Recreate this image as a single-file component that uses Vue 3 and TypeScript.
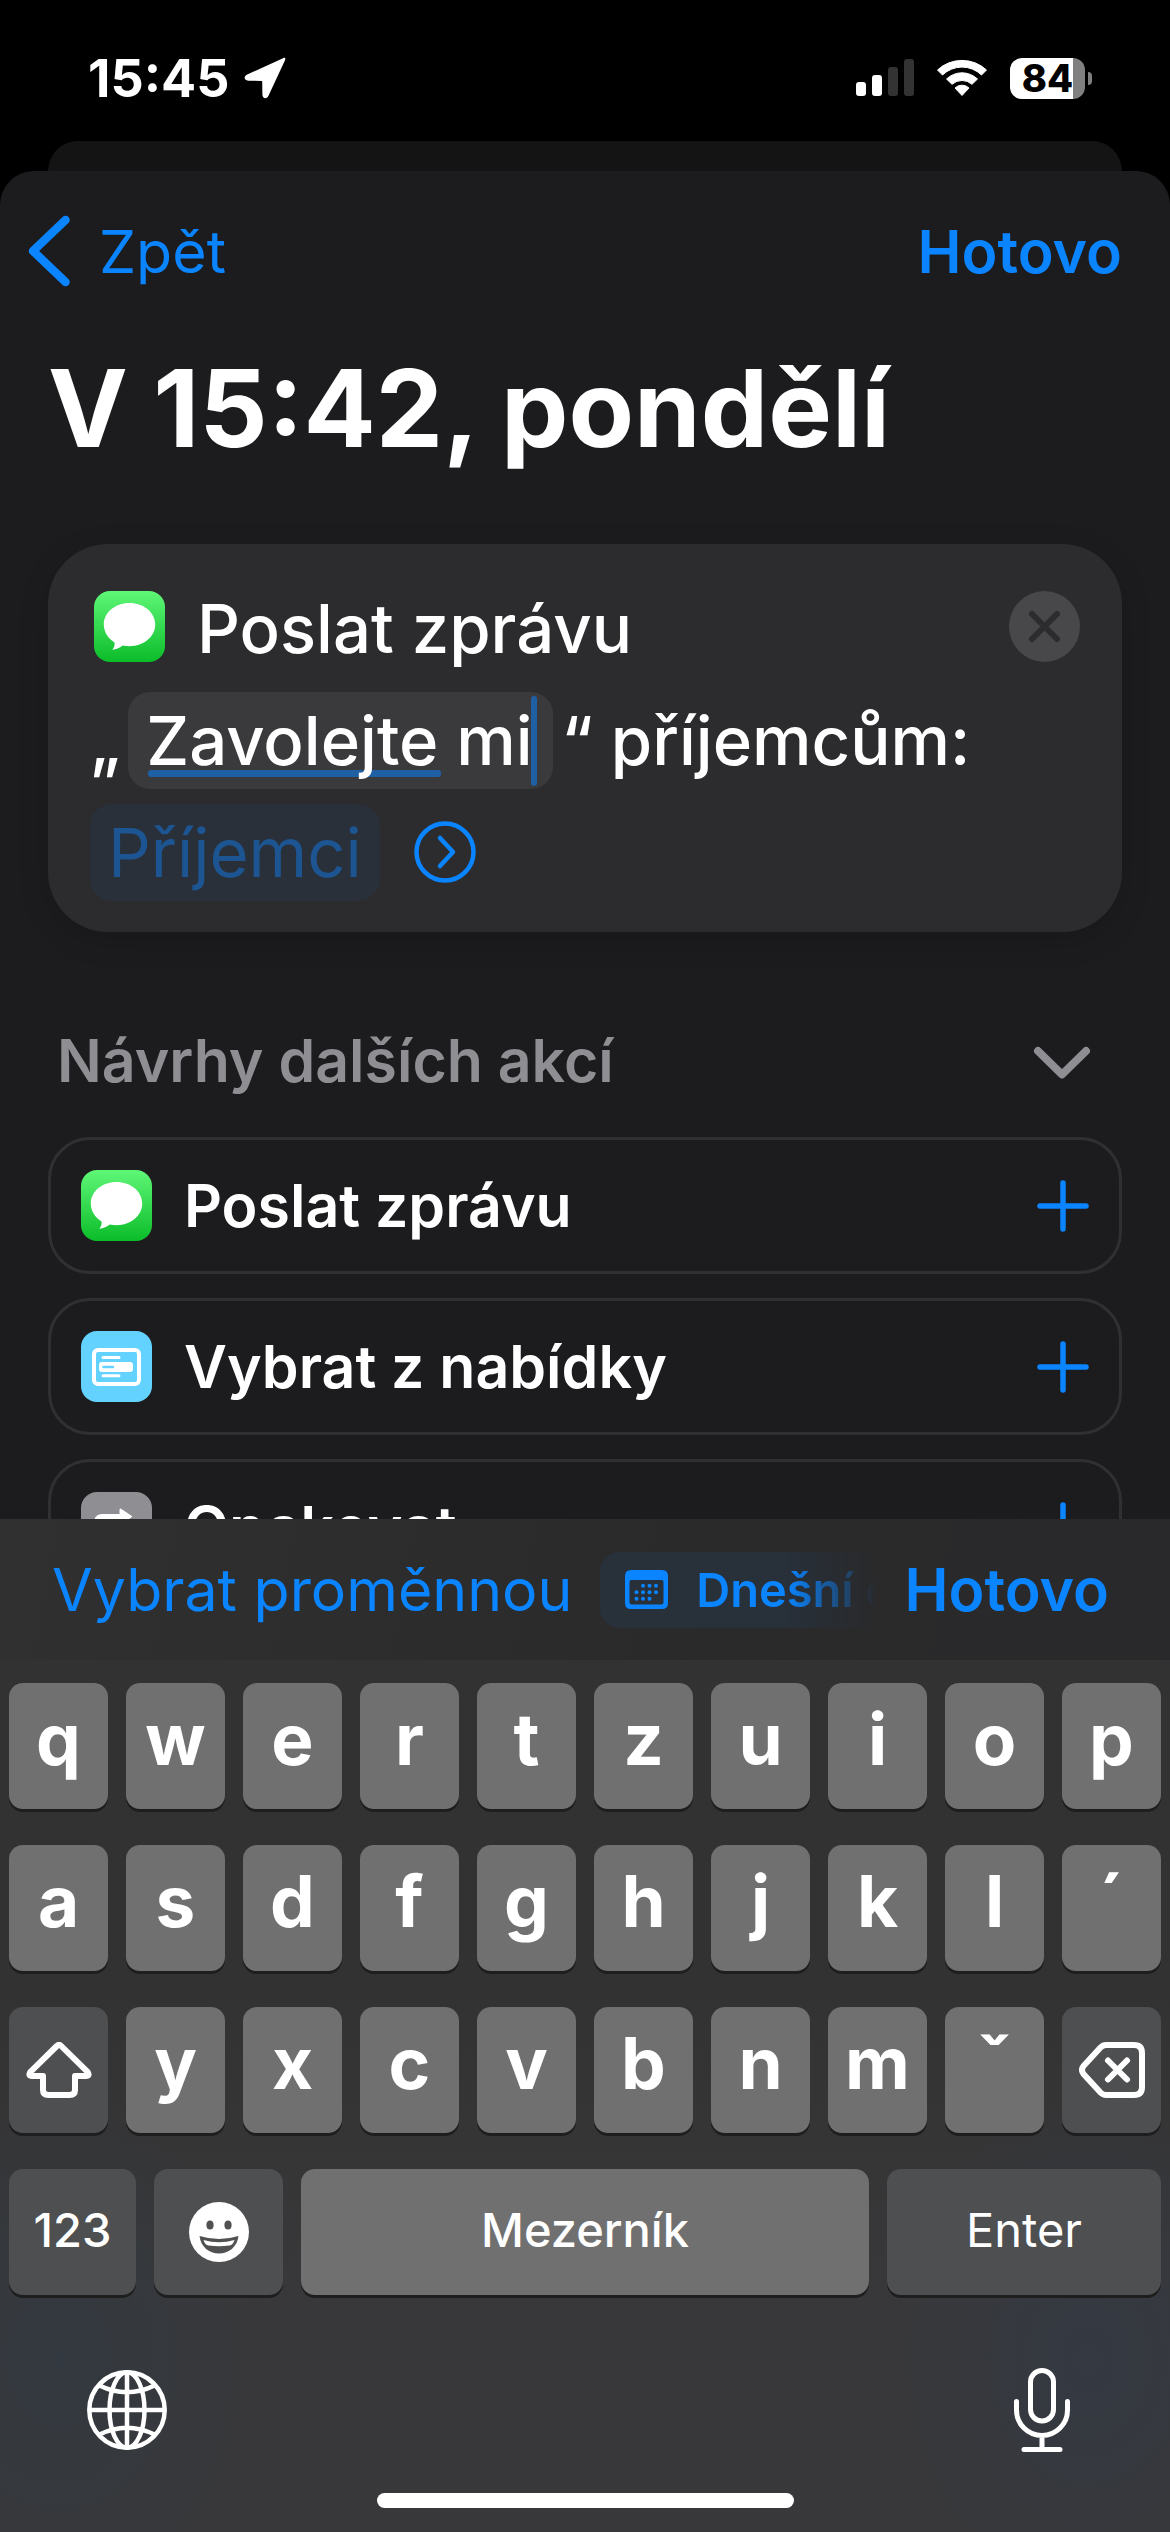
<script setup lang="ts">
import { ref } from 'vue'

interface Suggestion {
  id: string
  label: string
  icon: 'messages' | 'menu' | 'repeat'
}

const message = ref('Zavolejte mi')

const suggestions: Suggestion[] = [
  { id: 'send', label: 'Poslat zprávu', icon: 'messages' },
  { id: 'menu', label: 'Vybrat z nabídky', icon: 'menu' },
  { id: 'repeat', label: 'Opakovat', icon: 'repeat' },
]

const topRow = ['q', 'w', 'e', 'r', 't', 'z', 'u', 'i', 'o', 'p']
const homeRow = ['a', 's', 'd', 'f', 'g', 'h', 'j', 'k', 'l', '´']
const bottomRow = ['y', 'x', 'c', 'v', 'b', 'n', 'm', 'ˇ']
</script>

<template>
  <div class="screen">
    <header class="status">
      <div class="status-left">
        <span class="clock">15:45</span>
        <svg class="location" viewBox="0 0 42 42" aria-hidden="true">
          <path d="M39 1.2 3.2 17.6C-.8 19.5.2 23.6 4.2 23.7L17.6 23.9C18 23.9 18.2 24.1 18.2 24.5L18.4 37.6C18.5 42 22.8 42.6 24.6 38.6L41 3.2C42 1 40.8.4 39 1.2Z" fill="#fff" />
        </svg>
      </div>
      <div class="status-right">
        <svg class="signal" viewBox="0 0 58 38" aria-hidden="true">
          <rect x="0" y="23" width="10" height="14" rx="3" fill="#fff" />
          <rect x="16" y="16" width="10" height="21" rx="3" fill="#fff" />
          <rect x="32" y="8" width="10" height="29" rx="3" fill="#333" />
          <rect x="48" y="0" width="10" height="37" rx="3" fill="#333" />
        </svg>
        <svg class="wifi" viewBox="0 0 52 38" aria-hidden="true">
          <path d="M1.5 11A36 36 0 0 1 50.5 11L45.5 16A28 28 0 0 0 6.500 16Z" fill="#fff" stroke="#fff" stroke-linejoin="round" />
          <path d="M10.5 20A22.5 22.5 0 0 1 41.5 20L36 25.3A15 15 0 0 0 16 25.300Z" fill="#fff" stroke="#fff" stroke-linejoin="round" />
          <path d="M19 29A10 10 0 0 1 33 29L26 36.5Z" fill="#fff" stroke="#fff" stroke-linejoin="round" />
        </svg>
        <div class="battery"><span class="battery-level">84</span></div>
      </div>
    </header>

    <div class="sheet-behind"></div>

    <main class="sheet">
      <nav class="sheet-nav">
        <button type="button" class="link-button back">
          <svg class="back-icon" viewBox="0 0 42 72" aria-hidden="true">
            <path d="M37.5 5 5 36 37.5 67" fill="none" stroke="currentColor" stroke-width="8.5" stroke-linecap="round" stroke-linejoin="round" />
          </svg>
          <span>Zpět</span>
        </button>
        <button type="button" class="link-button strong">Hotovo</button>
      </nav>

      <h1 class="title">V 15:42, pondělí</h1>

      <section class="card">
        <div class="card-line">
          <svg class="app-icon raised" viewBox="0 0 71 71" aria-hidden="true">
            <defs>
              <linearGradient id="green-card" x1="0" y1="0" x2="0" y2="1">
                <stop offset="0" stop-color="#5ff777" />
                <stop offset="1" stop-color="#0bbc29" />
              </linearGradient>
            </defs>
            <rect width="71" height="71" rx="16" fill="url(#green-card)" />
            <path d="M35.5 12C21 12 9.8 21.6 9.8 33.6 9.8 41 14 47.6 20.5 51.5 21 54 20 57 18.2 58.8 22.5 58.6 26.3 56.7 28.7 54.6 31 55.1 33.2 55.3 35.5 55.3 50 55.3 61.2 45.6 61.2 33.6 61.2 21.6 50 12 35.5 12Z" fill="#fff" />
          </svg>
          <span class="card-name">Poslat zprávu</span>
          <button type="button" class="clear raised" aria-label="Odstranit">
            <svg viewBox="0 0 71 71" aria-hidden="true">
              <path d="M23 23 48 48M48 23 23 48" stroke="#2c2c2e" stroke-width="6" stroke-linecap="round" />
            </svg>
          </button>
        </div>
        <div class="card-line">
          <span>„</span>
          <label class="field">
            <span class="field-underline"></span>
            <input v-model="message" type="text" class="field-input" aria-label="Zpráva" />
            <span class="field-caret"></span>
          </label>
          <span>“ příjemcům:</span>
        </div>
        <div class="card-line">
          <button type="button" class="recipients">Příjemci</button>
          <button type="button" class="expand" aria-label="Zobrazit více">
            <svg viewBox="0 0 62 62" aria-hidden="true">
              <circle cx="31" cy="31" r="28.5" fill="none" stroke="currentColor" stroke-width="4.5" />
              <path d="M26 17 39 31 26 45" fill="none" stroke="currentColor" stroke-width="4.5" stroke-linecap="round" stroke-linejoin="round" />
            </svg>
          </button>
        </div>
      </section>

      <button type="button" class="section-head">
        <span>Návrhy dalších akcí</span>
        <svg class="section-chevron" viewBox="0 0 58 34" aria-hidden="true">
          <path d="M5 5 29 28.5 53 5" fill="none" stroke="currentColor" stroke-width="8" stroke-linecap="round" stroke-linejoin="round" />
        </svg>
      </button>

      <div class="suggestions">
        <button v-for="item in suggestions" :key="item.id" type="button" class="suggestion">
          <svg v-if="item.icon === 'messages'" class="app-icon" viewBox="0 0 71 71" aria-hidden="true">
            <defs>
              <linearGradient id="green-row" x1="0" y1="0" x2="0" y2="1">
                <stop offset="0" stop-color="#5ff777" />
                <stop offset="1" stop-color="#0bbc29" />
              </linearGradient>
            </defs>
            <rect width="71" height="71" rx="16" fill="url(#green-row)" />
            <path d="M35.5 12C21 12 9.8 21.6 9.8 33.6 9.8 41 14 47.6 20.5 51.5 21 54 20 57 18.2 58.8 22.5 58.6 26.3 56.7 28.7 54.6 31 55.1 33.2 55.3 35.5 55.3 50 55.3 61.2 45.6 61.2 33.6 61.2 21.6 50 12 35.5 12Z" fill="#fff" />
          </svg>
          <svg v-else-if="item.icon === 'menu'" class="app-icon" viewBox="0 0 71 71" aria-hidden="true">
            <rect width="71" height="71" rx="16" fill="#64d2ff" />
            <rect x="13" y="19" width="45" height="34" rx="4" fill="none" stroke="#fff" stroke-width="4" />
            <path d="M22 26.5H38M22 44.8H38" stroke="#fff" stroke-width="3" stroke-linecap="round" />
            <rect x="18" y="31" width="34" height="10" rx="3" fill="#fff" />
            <path d="M22.5 36H32" stroke="#64d2ff" stroke-width="2.5" stroke-linecap="round" />
          </svg>
          <svg v-else class="app-icon" viewBox="0 0 71 71" aria-hidden="true">
            <rect width="71" height="71" rx="16" fill="#8e8e93" />
            <path d="M15.5 34V31Q15.5 24.5 22 24.5H42M55.5 37V40Q55.5 46.5 49 46.5H29" fill="none" stroke="#fff" stroke-width="5" stroke-linecap="round" />
            <path d="M39.5 17.5V31.5L50 24.5ZM31.5 39.5V53.5L21 46.5Z" fill="#fff" stroke="#fff" stroke-width="2" stroke-linejoin="round" />
          </svg>
          <span class="suggestion-label">{{ item.label }}</span>
          <svg class="plus" viewBox="0 0 52 52" aria-hidden="true">
            <path d="M26 3V49M3 26H49" stroke="#0a84ff" stroke-width="5.5" stroke-linecap="round" />
          </svg>
        </button>
      </div>
    </main>

    <footer class="keyboard">
      <div class="toolbar">
        <button type="button" class="link-button">Vybrat proměnnou</button>
        <div class="chips">
          <button type="button" class="chip">
            <svg class="calendar" viewBox="0 0 43 39" aria-hidden="true">
              <path d="M6 0H37Q43 0 43 6V33Q43 39 37 39H6Q0 39 0 33V6Q0 0 6 0ZM6.5 10Q4.5 10 4.5 12V32Q4.5 34.5 7 34.5H36Q38.5 34.5 38.5 32V12Q38.5 10 36.5 10Z" fill="currentColor" fill-rule="evenodd" />
              <g fill="currentColor">
                <circle cx="18" cy="15.8" r="2" /><circle cx="24.5" cy="15.8" r="2" /><circle cx="31" cy="15.8" r="2" />
                <circle cx="11.5" cy="22.3" r="2" /><circle cx="18" cy="22.3" r="2" /><circle cx="24.5" cy="22.3" r="2" /><circle cx="31" cy="22.3" r="2" />
                <circle cx="11.5" cy="28.8" r="2" /><circle cx="18" cy="28.8" r="2" /><circle cx="24.5" cy="28.8" r="2" />
              </g>
            </svg>
            <span>Dnešní datum</span>
          </button>
        </div>
        <button type="button" class="link-button strong">Hotovo</button>
      </div>

      <div class="keys">
        <div class="key-row">
          <button v-for="k in topRow" :key="k" type="button" class="key">{{ k }}</button>
        </div>
        <div class="key-row">
          <button v-for="k in homeRow" :key="k" type="button" class="key">{{ k }}</button>
        </div>
        <div class="key-row">
          <button type="button" class="key dark" aria-label="Shift">
            <svg class="key-icon" viewBox="0 0 66 56" aria-hidden="true">
              <path d="M30.8 4Q33 1.8 35.2 4L61.8 30.2Q64 34 60 34H49V48Q49 53 43.5 53H22.5Q17 53 17 48V34H6Q2 34 4.2 30.2Z" fill="none" stroke="#fff" stroke-width="6" stroke-linejoin="round" />
            </svg>
          </button>
          <button v-for="k in bottomRow" :key="k" type="button" class="key">{{ k }}</button>
          <button type="button" class="key dark" aria-label="Smazat">
            <svg class="key-icon" viewBox="0 0 66 56" aria-hidden="true">
              <path d="M27 3H55Q63 3 63 11V45Q63 53 55 53H27Q24 53 21.5 50.5L4.5 32Q1.5 28 4.5 24L21.5 5.5Q24 3 27 3Z" fill="none" stroke="#fff" stroke-width="6" stroke-linejoin="round" />
              <path d="M29 18.500 48 37.5M48 18.5 29 37.5" stroke="#fff" stroke-width="6" stroke-linecap="round" />
            </svg>
          </button>
        </div>
        <div class="key-row function-row">
          <button type="button" class="key dark small medium">123</button>
          <button type="button" class="key dark small" aria-label="Emoji">
            <svg class="emoji" viewBox="0 0 60 60" aria-hidden="true">
              <circle cx="30" cy="30" r="30" fill="#fff" />
              <ellipse cx="21" cy="23" rx="3.6" ry="4.5" fill="#505152" />
              <ellipse cx="39" cy="23" rx="3.6" ry="4.5" fill="#505152" />
              <path d="M10.5 34Q30 40 49.5 34C48 45 40 51.5 30 51.5S12 45 10.5 34Z" fill="#505152" />
              <path d="M14.5 38Q30 42.5 45.5 38Q44 43 40.5 43.5Q30 45 19.5 43.5Q16 43 14.5 38Z" fill="#fff" />
            </svg>
          </button>
          <button type="button" class="key small medium">Mezerník</button>
          <button type="button" class="key dark small">Enter</button>
        </div>
      </div>

      <div class="dock">
        <button type="button" class="dock-button" aria-label="Další klávesnice">
          <svg class="globe" viewBox="0 0 80 80" fill="none" stroke="#fff" stroke-width="4.5" aria-hidden="true">
            <circle cx="40" cy="40" r="37.7" />
            <ellipse cx="40" cy="40" rx="17.5" ry="37.7" />
            <path d="M40 2V78M2 40H78M12.500 15.5Q40 29 67.5 15.5M12.5 64.5Q40 51 67.5 64.5" />
          </svg>
        </button>
        <button type="button" class="dock-button" aria-label="Diktování">
          <svg class="mic" viewBox="0 0 56 84" fill="none" stroke="#fff" stroke-width="5" stroke-linecap="round" aria-hidden="true">
            <rect x="16.5" y="2.5" width="23" height="50.5" rx="11.5" />
            <path d="M2.5 33.5V42A25.5 25.5 0 0 0 53.5 42V33.5M28 67.5V81M10 81.5H46" />
          </svg>
        </button>
      </div>
      <div class="home-bar"></div>
    </footer>
  </div>
</template>

<style>
html,
body {
  margin: 0;
  background: #000;
}
</style>

<style scoped>
.screen {
  display: flex;
  flex-direction: column;
  height: 100vh;
  overflow: hidden;
  background: #000;
  color: #fff;
  font-family: Inter, "Liberation Sans", sans-serif;
}

button {
  margin: 0;
  padding: 0;
  border: 0;
  background: none;
  color: inherit;
  font: inherit;
  white-space: nowrap;
  cursor: pointer;
}

svg {
  display: block;
  flex: none;
}

.status {
  flex: none;
  display: flex;
  justify-content: space-between;
  align-items: center;
  box-sizing: border-box;
  height: 141px;
  padding: 15px 78px 0 88px;
}

.status-left {
  display: flex;
  align-items: center;
  gap: 15px;
}

.clock {
  font-size: 52px;
  font-weight: 700;
}

.location {
  width: 42px;
  height: 42px;
}

.status-right {
  display: flex;
  align-items: center;
  gap: 22px;
}

.signal {
  width: 58px;
  height: 38px;
}

.wifi {
  width: 52px;
  height: 38px;
}

.battery {
  position: relative;
  display: flex;
  align-items: center;
  justify-content: center;
  width: 75px;
  height: 41px;
  margin-right: 7px;
  border-radius: 12px;
  background: linear-gradient(90deg, #fff 84%, #808080 84%);
}

.battery::after {
  content: "";
  position: absolute;
  left: 78px;
  top: 14px;
  width: 4px;
  height: 13px;
  border-radius: 0 4px 4px 0;
  background: #808080;
}

.battery-level {
  color: #000;
  font-size: 38px;
  font-weight: 800;
  line-height: 41px;
}

.sheet-behind {
  flex: none;
  height: 60px;
  margin: 0 48px -30px;
  border-radius: 30px 30px 0 0;
  background: #141414;
}

.sheet {
  position: relative;
  flex: 1;
  min-height: 0;
  overflow: hidden;
  border-radius: 34px 34px 0 0;
  background: #1c1c1e;
}

.sheet-nav {
  display: flex;
  justify-content: space-between;
  align-items: center;
  height: 160px;
  padding: 0 48px 0 28px;
}

.link-button {
  color: #0a84ff;
  font-size: 59px;
}

.strong {
  font-weight: 600;
}

.back {
  display: flex;
  align-items: center;
  gap: 29px;
}

.back-icon {
  width: 42px;
  height: 72px;
}

.title {
  margin: 11px 48px 70px;
  font-size: 107px;
  font-weight: 700;
  line-height: 132px;
  white-space: nowrap;
}

.card {
  margin: 0 48px;
  padding: 28px 42px 24px;
  border-radius: 60px;
  background: #2c2c2e;
  box-shadow: 0 8px 30px rgba(0, 0, 0, 0.15);
  font-size: 67px;
  font-weight: 500;
}

.card-line {
  display: flex;
  align-items: center;
  height: 112px;
  white-space: nowrap;
}

.app-icon {
  width: 71px;
  height: 71px;
}

.raised {
  margin-bottom: 4px;
}

.card-line > .app-icon {
  margin-left: 4px;
}

.card-name {
  flex: 1;
  padding-left: 32px;
}

.clear {
  width: 71px;
  height: 71px;
  border-radius: 50%;
  background: #48484a;
}

.field {
  position: relative;
  flex: none;
  width: 425px;
  height: 97px;
  margin: 0 8px;
  border-radius: 22px;
  background: #3a3a3c;
}

.field-underline {
  position: absolute;
  left: 20px;
  top: 78px;
  width: 293px;
  height: 7px;
  border-radius: 3px;
  background: #1f5fa3;
}

.field-input {
  position: relative;
  box-sizing: border-box;
  width: 100%;
  height: 97px;
  padding: 0 12px 0 18px;
  border: 0;
  outline: 0;
  background: none;
  color: #fff;
  font: inherit;
}

.field-caret {
  position: absolute;
  left: 403px;
  top: 4px;
  width: 6px;
  height: 90px;
  border-radius: 3px;
  background: #1f5fa3;
}

.recipients {
  height: 97px;
  padding: 0 18px;
  border-radius: 22px;
  background: #29303a;
  color: #1c5591;
  font-weight: 400;
}

.expand {
  width: 62px;
  height: 62px;
  margin-left: 34px;
  color: #0a84ff;
}

.section-head {
  display: flex;
  justify-content: space-between;
  align-items: center;
  width: 100%;
  height: 154px;
  margin-top: 51px;
  padding: 0 79px 0 57px;
  color: #8e8e93;
  font-size: 59px;
  font-weight: 600;
}

.section-chevron {
  width: 58px;
  height: 34px;
  margin-top: 6px;
}

.suggestions {
  display: flex;
  flex-direction: column;
  gap: 24px;
  padding: 0 48px;
}

.suggestion {
  display: flex;
  align-items: center;
  box-sizing: border-box;
  height: 137px;
  padding: 0 30px;
  border: 3px solid #303032;
  border-radius: 42px;
  font-size: 59px;
  font-weight: 600;
  text-align: left;
}

.suggestion-label {
  flex: 1;
  padding-left: 32px;
}

.plus {
  width: 52px;
  height: 52px;
}

.keyboard {
  flex: none;
  position: relative;
  background:
    radial-gradient(ellipse 200px 260px at 5% 83%, rgba(48, 58, 68, 0.6), transparent),
    radial-gradient(ellipse 200px 260px at 93% 83%, rgba(48, 58, 74, 0.5), transparent),
    linear-gradient(#323232 0 45%, #38383a 75%);
}

.toolbar {
  display: flex;
  align-items: center;
  height: 141px;
  padding: 0 61px 0 52px;
  background: linear-gradient(100deg, #303030, #2a2a2b 60%, #29292b);
}

.chips {
  flex: 1;
  min-width: 0;
  margin: 0 24px 0 28px;
  overflow: hidden;
  -webkit-mask-image: linear-gradient(90deg, #000 66%, transparent 98%);
  mask-image: linear-gradient(90deg, #000 66%, transparent 98%);
}

.chip {
  display: flex;
  align-items: center;
  gap: 28px;
  height: 76px;
  padding: 0 25px;
  border-radius: 20px;
  background: #28303a;
  color: #0a84ff;
  font-size: 47px;
  font-weight: 600;
}

.calendar {
  width: 43px;
  height: 39px;
}

.keys {
  display: flex;
  flex-direction: column;
  gap: 36px;
  padding: 23px 9px 0;
}

.key-row {
  display: grid;
  grid-template-columns: repeat(10, minmax(0, 1fr));
  gap: 18px;
}

.function-row {
  grid-template-columns: 127fr 129fr 568fr 274fr;
}

.key {
  display: flex;
  align-items: center;
  justify-content: center;
  box-sizing: border-box;
  height: 126px;
  padding-bottom: 14px;
  border-radius: 14px;
  background: #707070;
  box-shadow: 0 3px 0 #1e1e1e;
  font-size: 71px;
  font-weight: 700;
}

.dark {
  padding-bottom: 0;
  background: #4e4f50;
}

.small {
  padding-bottom: 6px;
  font-size: 47px;
  font-weight: 400;
}

.medium {
  font-weight: 500;
}

.key-icon {
  width: 66px;
  height: 56px;
}

.emoji {
  width: 60px;
  height: 60px;
  margin-top: 6px;
}

.dock {
  display: flex;
  justify-content: space-between;
  padding: 73px 100px 0 87px;
}

.dock-button {
  display: flex;
  align-items: center;
}

.globe {
  width: 80px;
  height: 80px;
}

.mic {
  width: 56px;
  height: 84px;
}

.home-bar {
  width: 417px;
  height: 15px;
  margin: 41px auto 24px;
  border-radius: 8px;
  background: #fff;
}
</style>
